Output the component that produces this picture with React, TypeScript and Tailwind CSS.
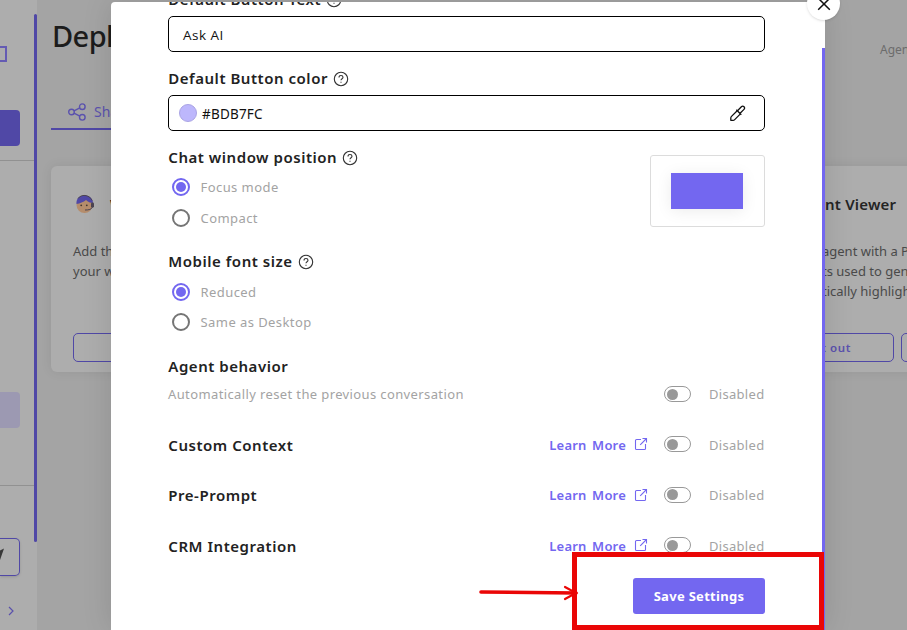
import type { ReactNode } from 'react';

const radioGroups = [
    { title: 'Chat window position', options: ['Focus mode', 'Compact'] },
    { title: 'Mobile font size', options: ['Reduced', 'Same as Desktop'] },
];

export default function App() {
    return (
        <div className="relative h-[630px] w-[907px] overflow-hidden bg-[#a4a4a4] font-['Noto_Sans',sans-serif]">
            <DeployPage />
            <SettingsModal />
            <Callout />
        </div>
    );
}

// Page behind the dialog, already dimmed
function DeployPage() {
    return (
        <div className="flex h-[630px] w-[1100px]">
            <aside className="flex w-[37px] shrink-0 bg-[#adadad]">
                <div className="flex w-[34px] flex-col">
                    <div className="mt-[46px] h-4 w-[7px] border-2 border-l-0 border-[#645bb3]" />
                    <div className="mt-12 h-9 w-5 rounded-r bg-[#5048a6]" />
                    <div className="mt-[14px] h-px bg-[#919191]" />
                    <div className="mt-[231px] h-9 w-5 rounded-r bg-[#9c99b2]" />
                    <div className="mt-[57px] h-px bg-[#919191]" />
                    <div className="mt-[52px] h-[38px] w-5 rounded-r-[5px] border border-l-0 border-[#5048a6] pt-2 shadow-sm">
                        <svg width="5" height="14" viewBox="0 0 5 14">
                            <path d="M0 3.5 4 1.5 0 13Z" fill="#383838" />
                        </svg>
                    </div>
                    <svg className="mt-[30px] ml-[7px]" width="8" height="10" viewBox="0 0 8 10" fill="none">
                        <path d="M2 1l4 4-4 4" stroke="#5a51ac" strokeWidth="1.2" />
                    </svg>
                </div>
                <div className="mt-[14px] h-[528px] w-[3px] rounded-full bg-[#5048a6]" />
            </aside>

            <main className="flex-1 pl-[14px]">
                <div className="flex h-[72px] items-center">
                    <h1 className="w-[829px] pl-px text-[29px] font-medium tracking-[-0.6px] text-[#1c1c1c]">Deploy</h1>
                    <span className="pt-[27px] text-[12px] text-[#6c6c6c]">Agent</span>
                </div>
                <div className="mt-[23px] flex h-[35px] w-[110px] items-center gap-2 border-b-2 border-[#5048a6] pl-[17px] text-[14px] text-[#5b52ae]">
                    <svg width="18" height="18" viewBox="0 0 18 18" fill="none" stroke="currentColor" strokeWidth="1.4">
                        <circle cx="3.5" cy="9" r="2.8" />
                        <circle cx="14.3" cy="3.7" r="2.8" />
                        <circle cx="14.3" cy="14.3" r="2.8" />
                        <path d="M6 7.8l5.8-2.9M6 10.2l5.8 2.9" />
                    </svg>
                    Share
                </div>
                <div className="mt-9 flex gap-5">
                    <div className="h-[206px] w-[330px] rounded-md bg-[#adadad] px-[22px] pt-[25px] shadow-[0_0_12px_rgba(0,0,0,0.08)]">
                        <div className="flex h-[26px] items-center gap-[15px] pl-[2px]">
                            <Avatar />
                            <span className="text-[15px] font-semibold text-[#1c1c1c]">Widget</span>
                        </div>
                        <p className="mt-[24px] h-[92px] text-[13px] leading-5 text-[#4a4a4a]">
                            Add this to
                            <br />
                            your website
                        </p>
                        <div className="h-[29px] rounded-[5px] border border-[#5048a6]" />
                    </div>
                    <div className="h-[206px] flex-1 rounded-md bg-[#adadad] pt-[25px] pl-[388px] whitespace-nowrap shadow-[0_0_12px_rgba(0,0,0,0.08)]">
                        <div className="flex h-[26px] items-center">
                            <span className="pl-[36px] text-[15px] font-semibold tracking-[0.2px] text-[#242424]">nt Viewer</span>
                        </div>
                        <div className="mt-[24px] h-[92px] pl-[33px] text-[13px] leading-5 text-[#4a4a4a]">
                            <p>agent with a PDF</p>
                            <p>ts used to generate</p>
                            <p>tically highlight</p>
                        </div>
                        <div className="flex gap-[7px]">
                            <div className="flex h-[29px] w-[105px] items-center justify-end rounded-[5px] border border-[#5048a6] pr-[42px] text-[11.5px] font-semibold tracking-[0.6px] text-[#5b52ae]">
                                Test out
                            </div>
                            <div className="h-[29px] w-24 rounded-[5px] border border-[#5048a6]" />
                        </div>
                    </div>
                </div>
            </main>
        </div>
    );
}

function SettingsModal() {
    return (
        <>
            <div className="absolute top-[2px] left-[111px] h-[628px] w-[714px] overflow-hidden rounded-t bg-white pr-[60px] pl-[57px] shadow-[0_0_30px_rgba(0,0,0,0.12)]">
                <div className="-mt-[15px]">
                    <Heading help>Default Button Text</Heading>
                </div>
                <div className="mt-[5px] flex h-9 items-center rounded-[5px] border border-black px-[14px] pt-[2px] font-['Open_Sans',sans-serif] text-[13.5px] tracking-[0.5px] text-[#111]">
                    Ask AI
                </div>
                <div className="mt-[14px]">
                    <Heading help>Default Button color</Heading>
                </div>
                <div className="mt-[5px] flex h-9 items-center rounded-[5px] border border-black pr-[17px] pl-[10px]">
                    <span className="h-[18px] w-[18px] rounded-full border border-[#aaa4e4] bg-[#bdb7fc]" />
                    <span className="flex-1 pt-[2px] pl-[5px] text-[13.5px] tracking-[0.2px] text-[#111]">#BDB7FC</span>
                    <Eyedropper />
                </div>

                <div className="mt-[14px] flex justify-between">
                    <div>
                        {radioGroups.map((group) => (
                            <div key={group.title} className="h-[104.5px]">
                                <Heading help>{group.title}</Heading>
                                <div className="mt-[3px]">
                                    {group.options.map((option, i) => (
                                        <div key={option} className="flex h-[30.5px] items-center pl-[3.5px]">
                                            <Radio checked={i === 0} />
                                            <span className="pt-px pl-[11px] text-[13px] tracking-[0.43px] text-[#a3a3a3]">{option}</span>
                                        </div>
                                    ))}
                                </div>
                            </div>
                        ))}
                    </div>
                    <div className="mt-[10px] flex h-[72px] w-[115px] items-center justify-center rounded-[3px] border border-[#dcdcdc] pr-px">
                        <div className="h-9 w-[72px] bg-[#7367f0] shadow-[0_2px_16px_rgba(0,0,0,0.08)]" />
                    </div>
                </div>

                <Heading>Agent behavior</Heading>
                <div className="mt-1 flex h-6 items-center">
                    <span className="flex-1 pt-px text-[13px] tracking-[0.38px] text-[#a3a3a3]">
                        Automatically reset the previous conversation
                    </span>
                    <Toggle />
                </div>
                <div className="mt-[13px]">
                    {['Custom Context', 'Pre-Prompt', 'CRM Integration'].map((name) => (
                        <div key={name} className="flex h-[50.5px] items-center">
                            <div className="flex-1 pt-px">
                                <Heading>{name}</Heading>
                            </div>
                            <span className="pt-[2px] text-[13px] font-semibold tracking-[0.2px] text-[#7367f0] [word-spacing:2px]">Learn More</span>
                            <ExternalLink />
                            <Toggle />
                        </div>
                    ))}
                </div>
                <div className="mt-[7px] flex justify-end">
                    <button className="h-9 w-[132px] rounded-[3px] bg-[#7367f0] pt-[2px] text-[13px] font-bold tracking-[0.3px] text-white">
                        Save Settings
                    </button>
                </div>
            </div>
            <div className="absolute top-12 left-[822px] h-[582px] w-[3px] bg-[#7367f0]" />
            <div className="absolute -top-[13px] left-[807px] flex h-[33px] w-[33px] items-center justify-center rounded-full bg-white shadow-sm">
                <svg width="14" height="14" viewBox="0 0 14 14" stroke="#111" strokeWidth="1.5">
                    <path d="M1.2 1.2l11.6 11.6M12.8 1.2L1.2 12.8" />
                </svg>
            </div>
        </>
    );
}

function Heading({ children, help }: { children: ReactNode; help?: boolean }) {
    return (
        <div className="flex h-6 items-center gap-[5px] pl-[0.3px] text-[15px] font-semibold tracking-[0.53px] whitespace-nowrap text-[#222]">
            {children}
            {help && (
                <svg className="mt-px" width="16" height="16" viewBox="0 0 16 16" fill="none" stroke="#333" strokeWidth="1.1">
                    <circle cx="8" cy="8" r="6.7" />
                    <path d="M6 6.4c0-1.2.9-1.9 2-1.9s2 .8 2 1.8c0 1.4-2 1.4-2 3" />
                    <path d="M8 10.7v1.1" />
                </svg>
            )}
        </div>
    );
}

function Radio({ checked }: { checked: boolean }) {
    return checked ? (
        <span className="flex h-[18px] w-[18px] items-center justify-center rounded-full border-2 border-[#7367f0]">
            <span className="h-[10px] w-[10px] rounded-full bg-[#7367f0]" />
        </span>
    ) : (
        <span className="h-[18px] w-[18px] rounded-full border-2 border-[#757575]" />
    );
}

function Toggle() {
    return (
        <>
            <span className="flex h-4 w-[27px] items-center rounded-full border border-[#999] pl-[2px]">
                <span className="h-[11px] w-[11px] rounded-full bg-[#999]" />
            </span>
            <span className="w-[74px] pt-[2px] pl-[18px] text-[13px] tracking-[0.3px] text-[#a3a3a3]">Disabled</span>
        </>
    );
}

function ExternalLink() {
    return (
        <svg className="mr-[16px] ml-[8px]" width="14" height="14" viewBox="0 0 14 14" fill="none" stroke="#7367f0" strokeWidth="1.1">
            <path d="M7 2.500H2.600c-.7 0-1.100.4-1.100 1.100v7.800c0 .7.4 1.100 1.100 1.100h7.800c.7 0 1.100-.4 1.100-1.100V7" />
            <path d="M8.500 1.500h4v4M12.500 1.500L6.200 7.800" />
        </svg>
    );
}

function Eyedropper() {
    return (
        <svg width="18" height="18" viewBox="0 0 18 18" fill="none" stroke="#111" strokeWidth="1.3" strokeLinejoin="round">
            <path d="M8.200 6.700L2.500 12.400c-.5.5-.7 1-.7 1.700v2.200h2.200c.7 0 1.200-.2 1.700-.7L11.400 9.900" />
            <path d="M7.300 5.800l5 5M9.300 7.500l-.8-.8 3.900-3.900c.8-.8 1.800-.8 2.600 0s.8 1.800 0 2.600l-3.900 3.900" />
        </svg>
    );
}

function Avatar() {
    return (
        <svg width="20" height="20" viewBox="0 0 20 20">
            <circle cx="9.500" cy="11" r="8" fill="#b58d6c" />
            <path d="M1.500 10C1 4 5 1.500 9.700 1.500s8.300 3 8.300 7.500c-3 0-5-1-7-3C8.500 8 5 9.500 1.500 10Z" fill="#5048a6" />
            <path d="M3 4.500C6 .2 14 0 17.200 6.500" fill="none" stroke="#4c4451" />
            <path d="M17.500 13c-1 2.500-3.500 3-7.500 3" fill="none" stroke="#4c4451" />
            <rect x="16" y="8.500" width="3" height="5" rx="1.200" fill="#4c4451" />
            <circle cx="6.200" cy="11.300" r="0.900" fill="#403830" />
            <circle cx="11.800" cy="11.300" r="0.900" fill="#403830" />
        </svg>
    );
}

// Red box and arrow pointing at the save button
function Callout() {
    return (
        <>
            <div className="absolute top-[552px] left-[572px] h-[78px] w-[252px] border-5 border-[#ea0606]" />
            <svg className="absolute top-[584px] left-[478px]" width="102" height="18" viewBox="0 0 102 18" fill="none" stroke="#ea0606" strokeLinecap="round">
                <path d="M3 8L98 9" strokeWidth="3.600" />
                <path d="M87 3l11 6-11 6" strokeWidth="2.200" />
            </svg>
        </>
    );
}
